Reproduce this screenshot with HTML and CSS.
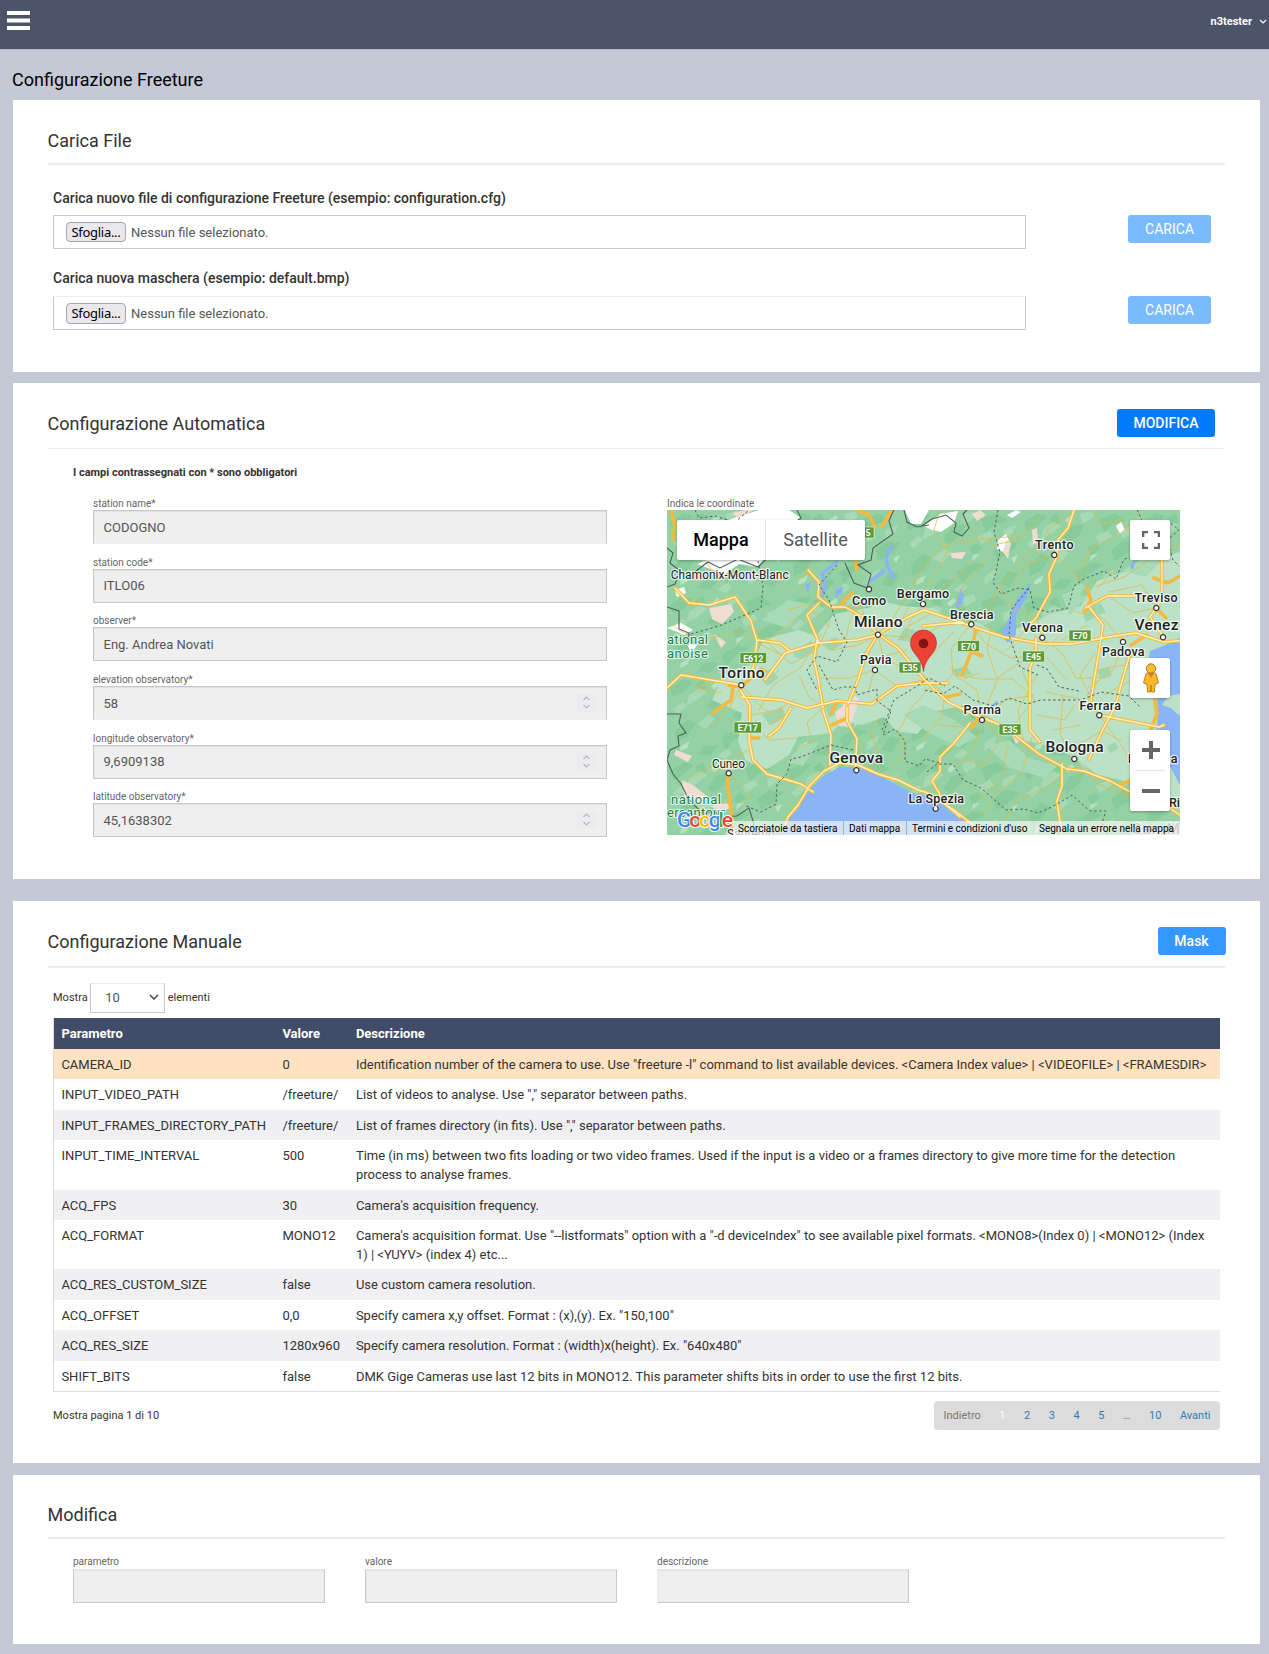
FILE: index.html
```html
<!DOCTYPE html>
<html lang="it">
<head>
<meta charset="utf-8">
<title>Configurazione Freeture</title>
<link rel="stylesheet" href="styles.css">
</head>
<body>
<header class="topbar">
  <svg class="burger" width="23" height="19" viewBox="0 0 23 19"><path d="M0 0h23v4H0zM0 7.5h23v4H0zM0 15h23v4H0z" fill="#fff"/></svg>
  <div class="user"><span>n3tester</span><svg width="8" height="6" viewBox="0 0 8 6"><path d="M1 1l3 3 3-3" fill="none" stroke="#fff" stroke-width="1.2"/></svg></div>
</header>
<main class="page">
  <h1 class="page-title">Configurazione Freeture</h1>

  <section class="card card-upload">
    <div class="card-head"><h2>Carica File</h2></div>
    <div class="upload-row">
      <div class="upload-main">
        <div class="upload-label">Carica nuovo file di configurazione Freeture (esempio: configuration.cfg)</div>
        <div class="file-input"><button class="browse">Sfoglia...</button><span>Nessun file selezionato.</span></div>
      </div>
      <button class="btn btn-disabled">CARICA</button>
    </div>
    <div class="upload-row second">
      <div class="upload-main">
        <div class="upload-label">Carica nuova maschera (esempio: default.bmp)</div>
        <div class="file-input soft-top"><button class="browse tall">Sfoglia...</button><span>Nessun file selezionato.</span></div>
      </div>
      <button class="btn btn-disabled">CARICA</button>
    </div>
  </section>

  <section class="card card-auto">
    <div class="card-head thin"><h2>Configurazione Automatica</h2><button class="btn btn-primary">MODIFICA</button></div>
    <p class="required-note">I campi contrassegnati con * sono obbligatori</p>
    <div class="auto-grid">
      <div class="fields">
        <div class="field"><label>station name*</label><div class="input no-bottom">CODOGNO</div></div>
        <div class="field"><label>station code*</label><div class="input">ITLO06</div></div>
        <div class="field"><label>observer*</label><div class="input">Eng. Andrea Novati</div></div>
        <div class="field"><label>elevation observatory*</label><div class="input no-bottom">58<span class="spin"><svg width="19" height="18" viewBox="0 0 19 18"><path d="M6.500 6l3-3 3 3M6.500 11l3 3 3-3"/></svg></span></div></div>
        <div class="field"><label>longitude observatory*</label><div class="input">9,6909138<span class="spin"><svg width="19" height="18" viewBox="0 0 19 18"><path d="M6.500 6l3-3 3 3M6.500 11l3 3 3-3"/></svg></span></div></div>
        <div class="field"><label>latitude observatory*</label><div class="input">45,1638302<span class="spin"><svg width="19" height="18" viewBox="0 0 19 18"><path d="M6.500 6l3-3 3 3M6.500 11l3 3 3-3"/></svg></span></div></div>
      </div>
      <div class="map-col">
        <label>Indica le coordinate</label>
        <div class="map">
          <svg class="map-canvas" width="513" height="325" viewBox="0 0 513 325">
            <defs>
              <pattern id="relief" width="118" height="83" patternUnits="userSpaceOnUse">
                <path fill="#7fc795" opacity=".6" d="M3 12l14-9 9 3-8 9-12 6zM40 30l9-13 15-4-6 12-11 9zM78 9l16-6 11 8-13 3-9 9zM8 55l13-12 8 5-9 13-11 5zM54 62l17-10 12 3-16 9-8 10zM90 40l12-9 14 2-9 10-13 8zM30 78l9-9 12 1-8 10zM96 74l9-13 10 2-8 14zM28 8l8-5 4 9-8 4zM66 38l8-5 5 6-9 6z"/>
                <path fill="#aadbb7" opacity=".85" d="M22 19l11-7 7 4-11 9-9 4zM59 4l12-3 2 6-11 7zM30 48l12-9 6 4-9 10zM74 27l13-6 4 5-12 8zM82 66l12-7-3 10-10 6zM6 34l9-8 5 4-9 8zM50 80l10-7 5 4-6 6zM100 20l13-5-3 8-9 6z"/>
                <path fill="#b9e1c4" d="M44 10l7-5 2 3-6 6zM14 70l9-5-3 7-7 3zM70 45l7-1-8 7zM108 48l7-3-4 8z"/>
              </pattern>
              <g id="town"><circle r="2.600" fill="#fff" stroke="#333" stroke-width="1.200"/></g>
            </defs>
            <rect width="513" height="325" fill="#94d2a5"/>
            <rect width="513" height="325" fill="url(#relief)"/>
            <path fill="#bbe2c6" d="M45 190l12-26 28-10 12-25 35-9 17 6 18-22 34-6 17-6 18 4 30 2 20 14 24 0 20 12 34-10 20-10 30-8 16-25 30-10 15-12 48-8v252l-25-3-27-16-40-9-38-27-44-9-24-20-27-14-28 6-20 23-21-3-12-14-22 8-19-4-12 12-33 4-9 18-22 14-21-8-8-20 4-28z"/>
            <g fill="#94d2a5" opacity=".7"><path d="M90 165l14-6 8 9-12 8zM128 140l16-9 5 8-14 10-9-2zM95 205l20-8 4 10-16 8zM230 130l8-12 14 3-7 11zM285 160l14-4 6 8-15 3zM415 100l18-7 6 9-20 10zM430 160l12-3 3 9-12 3zM155 135l13-8 9 6-12 8zM440 237l8-5 4 6-9 5zM158 196l12-8 8 10-16 10z"/></g>
            <g fill="#a9dab7"><path d="M236 205l20-10 30 14 24 18-18 10-30-14zM320 236l22-6 20 18 28 8-12 12-35-10zM95 110l26-20 22 4-22 24zM395 85l16-7 5 12-13 15zM455 60l25-12 16 2-18 17zM120 252l14-16 18-4-16 24z"/></g>
            <g fill="#fff"><path d="M30 54l20-8 12 4 10-7 27 3-9 11-18-3-14 10-20-7zM0 118l14-5 12 7-8 5zM52 14l12-5 28-9h30l12 8-20 12zM238 0h24l-8 14-10 0zM257 16l16-12 18-3-4 12-13 9-9-2zM331 30l8-6 5 11-6 8-8-4zM340 5l9-5 5 2-9 6zM449 16l5-4 4 8-5 4zM8 80l9-3 2 6-9 4zM20 133l10 2-6 9z"/></g>
            <g fill="#f0ddd2"><path d="M42 98l22-4 3 8-12 12-10-5zM47 124l12 8-5 6zM65 3l14-3h8l-16 8zM283 43l16-1-4 7-10-1zM305 4l8-4 6 5-9 6zM339 30l5 3-3 16-5-7zM365 20l5-2 1 12-5 5zM168 202l21-16 3 5-9 26-11-1zM9 240l16 6-4 6-14-7zM15 270l11 5 15 12-6 8-18-9zM43 296l16-3 7 4-12 5zM345 225l10 3-6 6z"/></g>
            <g fill="#8ab4f8">
              <path d="M111 325l7-12 13-14 8-15 16-17 17-10 18 0 27 11 26 14 26 7 24 13 25 23z"/>
              <path d="M513 128l-12 6-18 7-2 16 8 18 2 30-2 20 10 24 14 26z"/>
              <path d="M364 72l-4 15-11 18 0 20-8 8-8-8 8-14 8-20zM294 78l3 9-4 12-5-2 3-12zM168 80l8-4-1 6-6 6zM138 75l6-3-3 11zM463 58l3-8 2 2-2 8zM46 206l6 2-1 1zM315 218l1-3 1 8zM322 197l9-7-2 5-9 6zM424 60l7 5-1 1z"/>
              <path d="M226 36q-10 8-5 21l6 12M218 60l-16 12M171 51l-16 13 3 13-4 13" fill="none" stroke="#8ab4f8" stroke-width="3.500"/>
            </g>
            <path fill="#bbe2c6" d="M501 186l12-2v22l-9-8-9-3z"/>
            <!-- secondary roads -->
            <g fill="none" stroke="#e0bb4c" stroke-width=".9" opacity=".85">
              <path d="M22 20l10 22 12 17M2 112l10 8 20 10 28-5 32-5M80 152l14-20 18-8 20-19M92 200l14-25 28-18 20-33M135 60l14 10 7 22M130 70l14-9M165 95l14 2 14-8 4 17 13 18 20-8 13-20M195 90l-12 20-4 17-20 13M211 125l-10-16-12-8 10-14M211 125l25 2 20-2 20-10M211 125l-20 10-25 5M211 125l6 25 22 8 17 7M211 125l16-18 13-22M211 125l-10 20 6 15-5 20M240 85l16-28 20-22 38-6 40-3M256 94l-12 16-8 20M256 94l16-15 20-13 14-16M304 114l-15-23 10-20 24-25M304 114l18-16 10-20 22-28 18-15M304 114l15 20 25 14 28-2 20-20M304 114l-20 25 2 25-15 16M286 164l30 5 30 0 20 18M375 128l20 15 14 25 30 0M375 128l-18 22-26 18-12 30M355 160l12 30-20 25M375 128l-5-20-23-10-14-20M388 45l22 22 22 10 18-20M388 45l-28 8-12 22M388 45l-8-25 20-14M410 68l14-30 30-15 20-20M432 75l25-8 30-20 26-13M456 132l-10 28-25 18M456 132l-20-24-30-7M489 98l-23 5-24-16M489 98l-14-23-33 7M432 205l-20-16-33-7M432 205l-12-20 12-15M432 205l22 30 15 24M315 210l-5-30-22-14M315 210l24-20 28-5M315 210l-8 28-20 20M315 210l25 24-4 32-25 25M365 227l-10 36-26 20-15 22M407 249l-17 22-40 20-22 34M407 249l22 24 32 13 20 20M407 249l-14-25 3-38M356 230l-5-30 19-35M265 175l-20 22-14 25 8 23-14 10M208 160l-26 8-28 0M208 160l22 16 30-7M165 190l-25 22 5 20-15 6M74 175l20 22 18 12M74 175l-12 25-20 16M74 175l-24-5-22 8M85 205l25-5 20-12M82 240l-25 12-12 10M62 263l22 22-10 12M62 263l-18-8-22 15M82 210l20 20 30-2M115 196l-3 14-10 5M256 165l22 20-3 22-22 25M200 265l12-20-8-22 8-15M283 158l15 10 14-5M305 20l22 15 22-5 24-22M425 0l7 14 22-4 10 12M273 0l-6 20 14 20-25 45M120 100l20-5 22 22M115 145l-25-12-10-8"/>
              <path d="M30 178l25 5M98 130l26 24 26-14 14-30M240 117l25-14M240 140l-28 8M260 150l26-28M325 115l-5 25 10 28M340 140l25-28M395 130l25-15M400 170l-20-22M425 190l-12-25 15-22M470 140l-12 15-28 5M465 170l-28 15M370 205l28 5 10-16M386 220l28-5M410 235l25-14 20 10M300 250l18 5 12-20M270 215l25 2M132 165l10 22 15 10M100 170l12-10"/>
            </g>
            <!-- motorways -->
            <g fill="none" stroke-linejoin="round" stroke-linecap="round">
              <path stroke="#f4b93e" stroke-width="3.600" d="M0 178l14-13 48 8 12 2M8 78l14 15 20 2 26-8 16 24 6 20-4 28M90 130l23 3 10 8M141 60l11 12-1 15 13 10 14 0 22 12M98 170l20-27 34-10 38-3 21-5M152 133l-12-28 12-12M150 130l-3 20 4 18 5 30M175 93l10-10M190 60l-2-14 4-10M197 110l14 14 30-17 16-7 30 10 20 7 30 10 40 7 28 0 36-7 28-4 28 9 26-2 14-10 12-10M256 116l40-4M211 124l-12 20-8 26-10 24M211 124l20 14 25 30 12 12 13 12 25 12 30 12 36 28 28 15 17 2 26 10 30 16M279 187l14-3M295 112l14 6-4 22-10 25M295 137l20 9M407 0l-6 18-10 12-1 16-8 18 1 18-14 26-10 10M369 128l0 14-6 16 0 62 10 12M420 78l4 12-6 12M418 98l22-12 30 0M422 97l14 18-3 20-6 36-3 20M464 140l-10 35-6 22-12 22-14 30M432 205l60 12 5-2M495 125l-12-18 12-18 0-38-4-8M487 68l14 5 12-7M489 98l10 10M480 125l-16 10M73 180l10 15-1 35 4 20 14 14 34 10 12 8M74 187l40 3 26 8 30-7 35 3 25-18 26-3 25 0M66 178l-2 12-18 13M62 175l12 2 20-18 4 2M124 198l-12 20-10 8M82 228h10M62 264l-2 8 4 28 2 20M156 200l8 25-1 30M170 191l-6 13M180 197l0 14 10 18-2 30M165 215l15-7M143 275l14-14 16-8 18 2 20 9 20 6 20 10 10 3 26 17 28 22M143 275l-12 20-10 12-6 15M303 213l-16 20-14 14 0 14-8 10 14 24 14 12M311 208l-6 10M395 254l0 22-5 15 5 34M452 275l18-7M487 186l3 18-8 20M498 295l15 10M4 0l4 16-2 14M190 0l12 5 6 12M215 16l10-16"/>
              <path stroke="#fff2c2" stroke-width="1.400" d="M0 178l14-13 48 8 12 2M8 78l14 15 20 2 26-8 16 24 6 20-4 28M90 130l23 3 10 8M141 60l11 12-1 15 13 10 14 0 22 12M98 170l20-27 34-10 38-3 21-5M152 133l-12-28 12-12M150 130l-3 20 4 18 5 30M197 110l14 14 30-17 16-7 30 10 20 7 30 10 40 7 28 0 36-7 28-4 28 9 26-2 14-10 12-10M256 116l40-4M211 124l-12 20-8 26-10 24M211 124l20 14 25 30 12 12 13 12 25 12 30 12 36 28 28 15 17 2 26 10 30 16M407 0l-6 18-10 12-1 16-8 18 1 18-14 26-10 10M369 128l0 14-6 16 0 62 10 12M418 98l22-12 30 0M422 97l14 18-3 20-6 36-3 20M464 140l-10 35-6 22-12 22-14 30M432 205l60 12 5-2M495 125l-12-18 12-18 0-38-4-8M73 180l10 15-1 35 4 20 14 14 34 10 12 8M74 187l40 3 26 8 30-7 35 3 25-18 26-3 25 0M124 198l-12 20-10 8M156 200l8 25-1 30M180 197l0 14 10 18-2 30M143 275l14-14 16-8 18 2 20 9 20 6 20 10 10 3 26 17 28 22M143 275l-12 20-10 12-6 15M303 213l-16 20-14 14 0 14-8 10 14 24 14 12M395 254l0 22-5 15 5 34M498 295l15 10"/>
            </g>
            <!-- borders -->
            <g fill="none" stroke="#50605a" stroke-width="1.100">
              <path d="M0 38l6 5-3 10 10 8-5 13-8 3M0 97l12 4 0 18 10 4-1 12M130 0l4 8-14 10-14 25-15 14-20-8-18 9-12-6-20 15M178 53l9 20 13 5 4-14-13-9 13-5 2-12 20-14-4-13 6-14 10-4M237 0l3 12 10 5 12-2M253 17l12-8 14-4 10 8-2 9 8 4 7-8-6-14 4-4M0 204l14 0-2 9 7 10-8 3 1 10-9 4-3 10 6 14 8 10 8 16 14 14 12-3 4 6 18-1 12-8 5 16-6 12 6 6"/>
              <path stroke-dasharray="2.500 2.500" stroke-width="1" d="M28 0l4 8 16-2 20 6 14-12M24 124l28-8 26-11 16-7 2-22-6-30M170 55l-18 20 10 15 10 30 8 12-10 20-20-6-10 14 10 20M331 0l-4 22 6 20-4 20-3 10 8 12 17-6 12 2 4 18 14 4 20-4 6-22 10-7 20-8 12 8 8-20 17-4 8-8-6-24-8-18M362 78l-18 22-2 25 6 18 5 14 18 8M152 155l14 25 10-3 12 0 2 8 20-6 0 12 14 10-8 24 12-6 10 12 0 20 14 5 6-7 15 4M215 220l12-30 20-12 15-10 16 8M258 180l18 4 12-8 18 14 20 6 16-8 18 6 14-4 40 0 20-8 28 4 12 12M186 240l-22-5-30 12-10 2-4 15-10 10-1 20-15 8-15-6M260 262l10-8 16 0 10 16 18 8 25 22 18-1 14 4 14-6 20-12 18 16 16 0-4 12 6 12M370 155l10 4 12 18 20 4M500 10l12 10-12 10 6 20 6 6"/>
            </g>
            <g fill="#5b9c36" stroke="#fff" stroke-width=".5">
              <path d="M73 142.500h26.500v11H73zM232 152h22v11h-22zM290.500 130.500h22v11h-22zM402 120h22v11h-22zM355.500 141h22v11h-22zM67 212h27.500v11H67zM332 214h22v11h-22zM184 17h23v11h-23z"/>
            </g>
            <g class="shield"><text x="86.200" y="151.500">E612</text><text x="243" y="161">E35</text><text x="301.500" y="139.500">E70</text><text x="413" y="129">E70</text><text x="366.500" y="150">E45</text><text x="80.800" y="221">E717</text><text x="343" y="223">E35</text><text x="201" y="26">5</text></g>
            <g><use href="#town" x="202" y="79.300"/><use href="#town" x="256" y="94"/><use href="#town" x="211" y="124.700"/><use href="#town" x="208" y="160"/><use href="#town" x="74.300" y="175.300"/><use href="#town" x="61.700" y="263.300"/><use href="#town" x="189.300" y="260.300"/><use href="#town" x="268.700" y="298.700"/><use href="#town" x="387.300" y="45"/><use href="#town" x="304.300" y="114.300"/><use href="#town" x="375.300" y="127.700"/><use href="#town" x="489.300" y="98"/><use href="#town" x="496" y="127.300"/><use href="#town" x="456" y="132"/><use href="#town" x="315" y="210"/><use href="#town" x="432.300" y="205.300"/><use href="#town" x="407.300" y="249"/></g>
            <g class="place">
              <text x="3.700" y="68.700" class="minor" textLength="118">Chamonix-Mont-Blanc</text>
              <text x="185" y="94.500" textLength="34">Como</text><text x="229.700" y="88" textLength="52.500">Bergamo</text><text x="193" y="154" textLength="31.500">Pavia</text>
              <text x="45" y="257.700" class="minor" textLength="33">Cuneo</text><text x="241.500" y="292.700" textLength="55.500">La Spezia</text><text x="368" y="39" textLength="38.500">Trento</text>
              <text x="283" y="109" textLength="43.500">Brescia</text><text x="355" y="121.700" textLength="41">Verona</text><text x="467.500" y="92" textLength="43">Treviso</text>
              <text x="435" y="146.300" textLength="42.500">Padova</text><text x="296.500" y="204" textLength="37.500">Parma</text><text x="412.500" y="200" textLength="41.500">Ferrara</text>
              <text x="461" y="252.700" textLength="49.500">Ravenna</text><text x="502" y="297">Ri</text><text x="60" y="328" class="minor">Sanremo</text>
            </g>
            <g class="place big"><text x="187" y="117" textLength="48.500">Milano</text><text x="51.500" y="168" textLength="46">Torino</text><text x="162.500" y="253" textLength="53.500">Genova</text><text x="467.500" y="120" textLength="44">Venez</text><text x="378.500" y="242" textLength="58">Bologna</text><text x="465" y="324" class="faded" textLength="48">San M</text></g>
            <g class="park"><text x="0" y="134" textLength="41">ational</text><text x="0" y="147.700" textLength="41">anoise</text><text x="4" y="294" textLength="50">national</text><text x="0" y="306.500" textLength="58">ercantour</text></g>
            <g class="logo"><text x="10" y="316.500" textLength="56"><tspan fill="#4285f4">G</tspan><tspan fill="#ea4335">o</tspan><tspan fill="#fbbc05">o</tspan><tspan fill="#4285f4">g</tspan><tspan fill="#34a853">l</tspan><tspan fill="#ea4335">e</tspan></text></g>
            <path d="M256.500 161.500c-1-8-4-12-8-17-3-4-5-7-5-11.500a13 13 0 0 1 26 0c0 4.500-2 7.500-5 11.500-4 5-7 9-8 17z" fill="#ea4335" stroke="#c5221f" stroke-width=".6"/><circle cx="256.500" cy="133.500" r="4.800" fill="#811411"/>
          </svg>
          <div class="map-type"><b>Mappa</b><span>Satellite</span></div>
          <div class="map-btn fullscreen"><svg width="18" height="18" viewBox="0 0 18 18"><path d="M0 0h6v2.300H2.300V6H0zM12 0h6v6h-2.300V2.300H12zM0 12h2.300v3.700H6V18H0zM15.700 12H18v6h-6v-2.300h3.700z" fill="#666"/></svg></div>
          <div class="map-btn pegman"><svg width="18" height="30" viewBox="0 0 18 30"><path d="M4 11l3-2h4l3 2 2.500 9-2.500 1-1 0-.5 8h-3L9 22l-.5 7h-3L5 21H4l-2.500-1z" fill="#fbb829" stroke="#b8791c" stroke-width=".9"/><path d="M6 10h6l-3 5z" fill="#e37a22"/><circle cx="9" cy="5.500" r="4.700" fill="#fbbc2c" stroke="#8d7340" stroke-width=".9"/></svg></div>
          <div class="map-zoom"><svg width="40" height="81" viewBox="0 0 40 81"><path d="M12 18h7v-7h4v7h7v4h-7v7h-4v-7h-7zM12 59h18v4H12z" fill="#666"/><path d="M5 40.500h30" stroke="#e6e6e6"/></svg></div>
          <div class="map-credits"><span class="c1">Scorciatoie da tastiera</span><span class="c2">Dati mappa</span><span class="c3">Termini e condizioni d'uso</span><span class="c4">Segnala un errore nella mappa</span></div>
        </div>
      </div>
    </div>
  </section>

  <section class="card card-manual">
    <div class="card-head"><h2>Configurazione Manuale</h2><button class="btn btn-mask">Mask</button></div>
    <div class="length-row"><span>Mostra</span><div class="select"><span>10</span><svg width="10" height="7" viewBox="0 0 10 7"><path d="M1 1l4 4 4-4" fill="none" stroke="#444" stroke-width="1.500"/></svg></div><span>elementi</span></div>
    <table class="params">
      <colgroup><col class="col-name"><col class="col-value"><col></colgroup>
      <thead><tr><th>Parametro</th><th>Valore</th><th>Descrizione</th></tr></thead>
      <tbody>
        <tr class="selected"><td>CAMERA_ID</td><td>0</td><td>Identification number of the camera to use. Use "freeture -l" command to list available devices. &lt;Camera Index value&gt; | &lt;VIDEOFILE&gt; | &lt;FRAMESDIR&gt;</td></tr>
        <tr><td>INPUT_VIDEO_PATH</td><td>/freeture/</td><td>List of videos to analyse. Use "," separator between paths.</td></tr>
        <tr><td>INPUT_FRAMES_DIRECTORY_PATH</td><td>/freeture/</td><td>List of frames directory (in fits). Use "," separator between paths.</td></tr>
        <tr><td>INPUT_TIME_INTERVAL</td><td>500</td><td>Time (in ms) between two fits loading or two video frames. Used if the input is a video or a frames directory to give more time for the detection<br>process to analyse frames.</td></tr>
        <tr><td>ACQ_FPS</td><td>30</td><td>Camera's acquisition frequency.</td></tr>
        <tr><td>ACQ_FORMAT</td><td>MONO12</td><td>Camera's acquisition format. Use "--listformats" option with a "-d deviceIndex" to see available pixel formats. &lt;MONO8&gt;(Index 0) | &lt;MONO12&gt; (Index<br>1) | &lt;YUYV&gt; (index 4) etc...</td></tr>
        <tr><td>ACQ_RES_CUSTOM_SIZE</td><td>false</td><td>Use custom camera resolution.</td></tr>
        <tr><td>ACQ_OFFSET</td><td>0,0</td><td>Specify camera x,y offset. Format : (x),(y). Ex. "150,100"</td></tr>
        <tr><td>ACQ_RES_SIZE</td><td>1280x960</td><td>Specify camera resolution. Format : (width)x(height). Ex. "640x480"</td></tr>
        <tr><td>SHIFT_BITS</td><td>false</td><td>DMK Gige Cameras use last 12 bits in MONO12. This parameter shifts bits in order to use the first 12 bits.</td></tr>
      </tbody>
    </table>
    <div class="table-foot">
      <span>Mostra pagina 1 di 10</span>
      <nav class="pager"><span class="muted">Indietro</span><span class="current">1</span><a>2</a><a>3</a><a>4</a><a>5</a><span class="muted">…</span><a>10</a><a>Avanti</a></nav>
    </div>
  </section>

  <section class="card card-edit">
    <div class="card-head"><h2>Modifica</h2></div>
    <div class="edit-row">
      <div class="field"><label>parametro</label><div class="input no-top"></div></div>
      <div class="field"><label>valore</label><div class="input no-top"></div></div>
      <div class="field"><label>descrizione</label><div class="input no-top no-left"></div></div>
    </div>
  </section>
</main>
</body>
</html>
```
FILE: styles.css
```css
* { box-sizing: border-box; }
body { margin: 0; background: #c5c9d5; font-family: Roboto, "Liberation Sans", sans-serif; font-size: 11px; color: #333; }
h1, h2, p { margin: 0; font-weight: 400; }
button { font-family: inherit; margin: 0; }

.topbar { height: 50px; background: #4b5468; border-bottom: 1px solid #b3b9c9; display: flex; justify-content: space-between; align-items: flex-start; padding: 11px 2px 0 7px; }
.user { display: flex; align-items: center; gap: 7px; color: #fff; font-weight: 700; font-size: 11px; line-height: 22px; }

.page { padding: 0 9px 10px 13px; }
.page-title { height: 50px; padding-top: 19px; font-size: 18px; line-height: 22px; color: #000; margin-left: -1px; }

.card { background: #fff; padding: 0 35px; }
.card-upload { height: 272px; }
.card-auto { height: 496px; margin-top: 11px; }
.card-manual { height: 562px; margin-top: 22px; }
.card-edit { height: 169px; margin-top: 12px; }

.card-head { height: 65px; border-bottom: 2px solid #ebedf2; display: flex; justify-content: space-between; align-items: flex-start; padding-top: 26px; }
.card-head h2 { font-size: 18px; line-height: 30px; margin-left: -.4px; }
.card-manual .card-head { height: 67px; }
.card-edit .card-head { height: 64px; border-color: #e6eaf0; padding-top: 25px; }
.card-head.thin { height: 66px; border-bottom-width: 1px; padding-right: 10px; }

.btn { height: 28px; border: 0; border-radius: 3px; color: #fff; font-size: 14px; line-height: 28px; padding: 0; font-weight: 400; }
.btn-disabled { width: 83px; background: #7abaff; }
.btn-primary { width: 98px; background: #007bff; font-weight: 500; }
.btn-mask { width: 68px; background: #3398ff; font-weight: 500; margin-right: -.5px; }

.upload-row { display: flex; justify-content: space-between; align-items: flex-end; padding: 24px 14px 0 5px; }
.upload-row .btn { margin-bottom: 6px; }
.upload-row.second { padding-top: 20px; }
.upload-main { width: 973px; }
.upload-label { font-weight: 500; font-size: 14px; line-height: 18px; margin-bottom: 8px; }
.second .upload-label { margin-bottom: 9px; }
.file-input { height: 34px; border: 1px solid #c8c8c8; display: flex; align-items: center; gap: 5px; padding-left: 12px; font-size: 13px; color: #555; }
.file-input span { padding-top: 1px; }
.soft-top { border-top-color: #efefef; }
.browse { width: 60px; height: 20px; padding: 0; border: 1px solid #a5a4b3; border-radius: 4px; background: #e9e9ed; color: #000; font: 13px/18px "Noto Sans", sans-serif; letter-spacing: -.3px; }
.browse.tall { height: 21px; }

.required-note { font-weight: 700; font-size: 11px; line-height: 14px; padding: 17px 0 0 25px; }
.auto-grid { display: flex; justify-content: space-between; padding: 17px 45px 0; }
.fields { width: 514px; }
label { display: block; font-size: 10px; line-height: 12px; height: 13px; padding-top: 1px; color: #666; }
.fields .field { height: 58.7px; }
.input { height: 34px; border: 1px solid #c8c8c8; background: #efefef; box-shadow: inset 0 1px 1px rgba(0,0,0,.06); display: flex; align-items: center; justify-content: space-between; padding: 0 10px 0 9.5px; font-size: 13px; color: #555; }
.no-bottom { border-bottom-color: #efefef; }
.no-top { border-top-color: #e8e8e8; }
.no-left { border-left-color: #efefef; }
.spin { width: 19px; height: 18px; background: #ececee; }
.spin svg { display: block; fill: none; stroke: #b8b8be; stroke-width: 1.2; }

.map-col { width: 513px; }
.map { position: relative; height: 325px; overflow: hidden; }
.map-canvas { display: block; }
.place text { font-size: 12.5px; font-weight: 500; fill: #222; stroke: #fff; stroke-width: 2.5px; stroke-opacity: .75; paint-order: stroke; stroke-linejoin: round; }
.place .minor { font-weight: 400; font-size: 12px; }
.place.big text { font-size: 15.5px; }
.place.big .faded { fill: #777; }
.park text { font-size: 13px; fill: #1a7f42; stroke: #fff; stroke-width: 2px; stroke-opacity: .8; paint-order: stroke; }
.shield text { font-size: 8.8px; font-weight: 700; fill: #fff; text-anchor: middle; }
.logo text { font-size: 21px; stroke: #fff; stroke-width: 2px; paint-order: stroke; font-weight: 500; }
.map-type { position: absolute; left: 10px; top: 10px; width: 188px; height: 40px; background: #fff; border-radius: 2px; box-shadow: 0 1px 3px rgba(0,0,0,.3); display: flex; font-size: 18px; line-height: 40px; text-align: center; }
.map-type b { width: 89px; font-weight: 500; color: #000; border-right: 1px solid #e6e6e6; }
.map-type span { width: 99px; color: #565656; }
.map-btn { position: absolute; left: 463px; width: 40px; height: 40px; background: #fff; border-radius: 2px; box-shadow: 0 1px 3px rgba(0,0,0,.3); display: flex; align-items: center; justify-content: center; padding-left: 2px; }
.fullscreen { top: 10px; }
.pegman { top: 148px; }
.map-zoom { position: absolute; left: 463px; top: 220px; width: 40px; height: 81px; background: #fff; border-radius: 2px; box-shadow: 0 1px 3px rgba(0,0,0,.3); }
.map-credits { position: absolute; left: 66px; right: 0; bottom: 0; height: 14px; background: rgba(245,245,245,.7); display: flex; font-size: 10px; line-height: 16px; color: #000; white-space: nowrap; }
.map-credits span { padding-left: 6px; border-right: 1px solid #8fb3ea; }
.map-credits .c1 { width: 111px; padding-left: 5px; }
.map-credits .c2 { width: 63px; padding-left: 5px; }
.map-credits .c3 { width: 127px; padding-left: 5px; border-color: #cfe0d2; }
.map-credits .c4 { border: 0; padding-left: 5px; }

.length-row { display: flex; align-items: center; gap: 2.5px; padding: 15px 0 5px 5px; font-size: 11px; }
.length-row > span { margin-top: -2px; }
.select { width: 75px; height: 30px; border: 1px solid #c8c8c8; border-top-color: #ececec; display: flex; align-items: center; justify-content: space-between; padding: 0 5px 1px 14px; font-size: 13px; color: #555; }

.params { width: 1167px; margin-left: 5px; border-collapse: separate; border-spacing: 0; table-layout: fixed; border-left: 1px solid #ddd; border-bottom: 1px solid #ddd; font-size: 13px; line-height: 19px; }
.col-name { width: 221px; }
.col-value { width: 73.500px; }
.params th { height: 31px; background: #414c68; color: #fff; font-weight: 700; text-align: left; padding: 0 0 0 7.4px; }
.params td { padding: 6px 0 5.400px 7.4px; vertical-align: top; white-space: nowrap; }
.params tbody tr:nth-child(odd) { background: #f0f0f2; }
.params tbody tr.selected { background: #ffe2c1; }

.table-foot { display: flex; justify-content: space-between; align-items: center; padding: 9px 5px 0; font-size: 11px; }
.pager { width: 286px; height: 29px; background: #dcdcdc; border-radius: 4px; display: flex; justify-content: space-between; align-items: center; padding: 0 9.5px; color: #337ab7; }
.muted { color: #777; }
.current { color: #fff; }

.edit-row { display: flex; gap: 40px; padding: 16px 25px 0; }
.edit-row .field { width: 252px; }
.edit-row .input { margin-top: 1px; }
```
